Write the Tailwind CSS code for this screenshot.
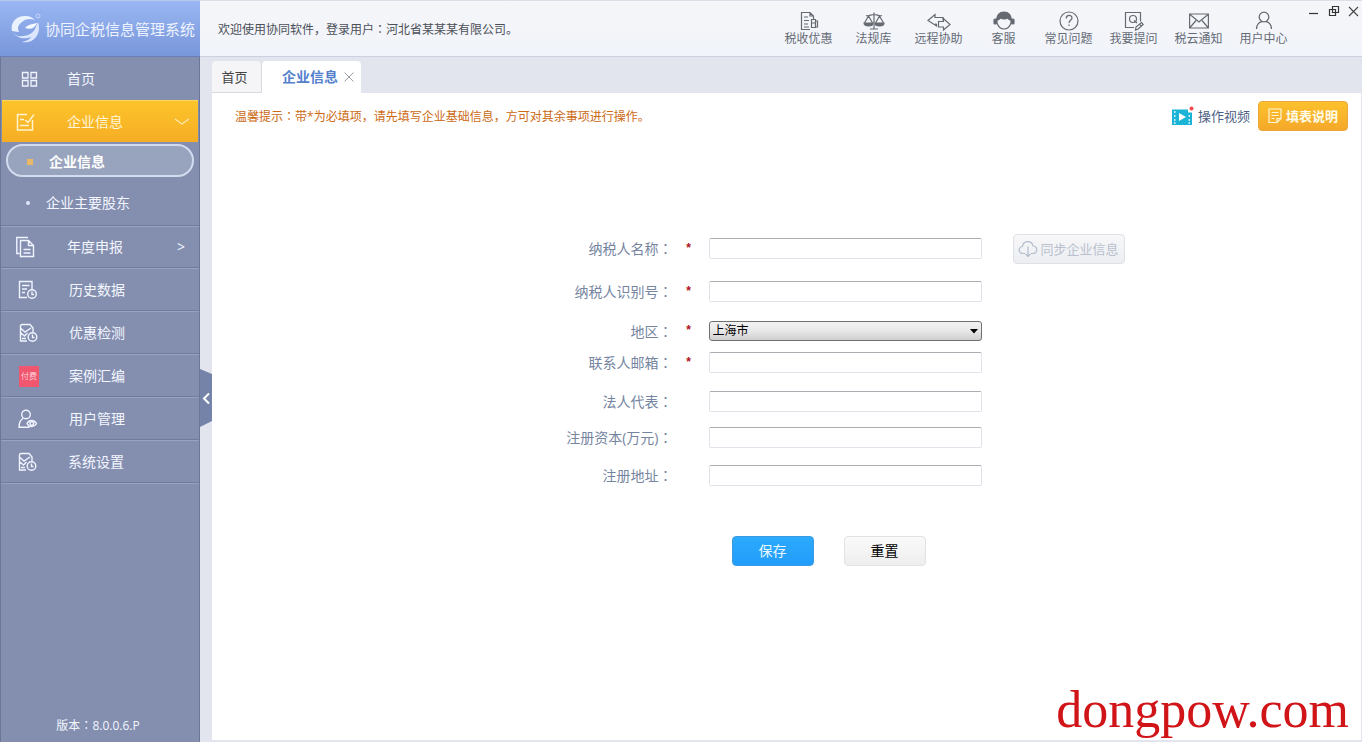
<!DOCTYPE html>
<html lang="zh-CN">
<head>
<meta charset="utf-8">
<title>协同企税信息管理系统</title>
<script src="https://cdn.jsdelivr.net/npm/@tailwindcss/browser@4"></script>
</head>
<body class="flex min-h-screen bg-[#e3e5ee] font-['Open_Sans','Noto_Sans_CJK_SC',sans-serif] text-sm leading-5">

<!-- Sidebar -->
<aside class="flex w-[200px] shrink-0 flex-col border-x border-[#6b7795] bg-[#848fb0] text-[#f3f6ff]">
  <div class="-mx-px flex h-[57px] items-center gap-1 border-b border-[#6a7fb5] border-t border-t-[#b9c9ee] bg-linear-to-b from-[#9ab6f3] to-[#7897da] pl-[11px] text-[15px] whitespace-nowrap text-[#eef3ff]">
    <svg class="h-8 w-[30px] shrink-0" viewBox="0 0 30 32">
      <path d="M1 18C-1 9 6 2 15 3c4 0 7 2 9 4-5-2-10-1-13 2-4 3-5 6-3 10-3 0-5-1-7-1z" fill="#eaf1ff"/>
      <path d="M1 18c2 4 6 6 11 5 5 0 10-3 12-7l3-7c2 6 1 11-2 15-4 5-9 6-14 5 5-1 8-3 9-5-7 3-15 1-19-6z" fill="#dce7ff"/>
      <path d="M14 15c3-4 8-4 12-5-2 5-6 7-12 5z" fill="#f4f8ff"/>
      <circle cx="27" cy="3" r="2" fill="none" stroke="#c6d6fa"/>
    </svg>
    <span>协同企税信息管理系统</span>
  </div>
  <nav class="flex flex-col">
    <a href="#" class="flex h-[43px] items-center pl-5">
      <svg class="w-[46px] h-4" viewBox="0 0 46 16" fill="none" stroke="#f0f4ff" stroke-width="1.3"><path d="M1.500 1.500h5.500v5.500h-5.500zM10 1.500h5.500v5.500h-5.500zM1.500 9.500h5.500v5.500h-5.500zM10 9.500h5.500v5.500h-5.500z"/></svg>
      首页</a>
    <a href="#" class="flex h-[42px] items-center justify-between border-t border-[#fdd45c] bg-linear-to-b from-[#fcc42a] to-[#f6ad25] pr-2 pl-3.5 text-[#fff6dc] ml-px mr-px">
      <span class="flex items-center"><svg class="h-5 w-[51px]" viewBox="0 0 51 20" fill="none" stroke="#fff3cf" stroke-width="1.500"><path d="M11 2.500H1.500v15.500h15V8M4 7.500h4M4 13.500h9M9 8l3 2.500 6-8"/></svg>企业信息</span>
      <svg class="h-2 w-4" viewBox="0 0 16 8" fill="none" stroke="#fde9b0" stroke-width="1.200"><path d="M1 1l7 5 7-5"/></svg>
    </a>
    <div class="flex h-[83px] flex-col px-[5px] pt-0.5">
      <a href="#" class="flex h-[34px] items-center rounded-full border-2 border-[#d3dbee] bg-[#98a3bd] pt-1 pl-[19px] font-bold text-white"><span class="mr-4 size-[6px] bg-[#e8b868]"></span>企业信息</a>
      <a href="#" class="flex h-[50px] items-center pt-1 pl-5"><span class="mr-4 size-1 rounded-full bg-[#dfe6fa]"></span>企业主要股东</a>
    </div>
    <a href="#" class="flex h-[43px] items-center justify-between border-t border-b border-t-[#6f7b9e] border-b-[#6f7b9e] pr-3.5 pl-[15px] shadow-[inset_0_1px_0_#98a3c2]">
      <span class="flex items-center"><svg class="h-[22px] w-[51px]" viewBox="0 0 51 22" fill="none" stroke="#f0f4ff" stroke-width="1.400"><path d="M3.500 17.500H.800V1.500h11.200M4.500 4.500h8l5 5v11h-13zM12.500 4.500v5h5M7.500 13.500h7M7.500 17h7"/></svg>年度申报</span><span>&gt;</span></a>
    <a href="#" class="flex h-[43px] items-center border-b border-[#6f7b9e] pt-0.5 pl-[17px] shadow-[inset_0_1px_0_#98a3c2]">
      <svg class="h-5 w-[51px]" viewBox="0 0 51 20" fill="none" stroke="#f0f4ff" stroke-width="1.400"><path d="M9 17.500H1.500v-16h12.500V9M4 5.500h7.500M4 9h5M4 12.500h3"/><circle cx="14" cy="14" r="4.300"/><path d="M14 11.500v3h2"/></svg>历史数据</a>
    <a href="#" class="flex h-[43px] items-center border-b border-[#6f7b9e] pt-0.5 pl-[17px] shadow-[inset_0_1px_0_#98a3c2]">
      <svg class="h-5 w-[51px]" viewBox="0 0 51 20" fill="none" stroke="#f0f4ff" stroke-width="1.400"><path d="M9 18H2.500V3q0-1.500 1.500-1.500h8l3 3.500v4M3 5.500l4 3.500 6-4M3 10l3.500 3 3-3M4 15.500h4"/><circle cx="14.500" cy="14" r="4.300"/><path d="M14.500 11.500v3h2"/></svg>优惠检测</a>
    <a href="#" class="flex h-[43px] items-center border-b border-[#6f7b9e] pt-0.5 pl-[18px] shadow-[inset_0_1px_0_#98a3c2]">
      <span class="mr-[30px] flex h-[21px] w-5 items-center justify-center bg-[#f0566e] text-[8px] text-[#ffd3d9] whitespace-nowrap">付费</span>案例汇编</a>
    <a href="#" class="flex h-[43px] items-center border-b border-[#6f7b9e] pt-0.5 pl-[17px] shadow-[inset_0_1px_0_#98a3c2]">
      <svg class="h-5 w-[51px]" viewBox="0 0 51 20" fill="none" stroke="#f0f4ff" stroke-width="1.400"><circle cx="8" cy="5.500" r="4.300"/><path d="M5 9.500C2.500 11 1 14 1 18.300h10.500M9 14.500c2-4 7-4 9.500 0-2.500 4-7.500 4-9.500 0z"/><circle cx="13.800" cy="14.500" r="1.800"/></svg>用户管理</a>
    <a href="#" class="flex h-[43px] items-center border-b border-[#6f7b9e] pt-0.5 pl-4 shadow-[inset_0_1px_0_#98a3c2,0_1px_0_#98a3c2]">
      <svg class="h-5 w-[51px]" viewBox="0 0 51 20" fill="none" stroke="#f0f4ff" stroke-width="1.400"><path d="M9 18H2.500V3q0-1.500 1.500-1.500h8l3 3.500v4M3 5.500l4 3.500 6-4M3 10l3.500 3 3-3M4 15.500h4"/><circle cx="14.500" cy="14" r="4.300"/><path d="M14.500 11.500v3h2"/></svg>系统设置</a>
  </nav>
  <p class="mt-auto pb-1.5 pr-1 text-center text-xs leading-5">版本<span lang="zh-TW" class="font-['Noto_Sans_CJK_TC']">：</span>8.0.0.6.P</p>
</aside>

<div class="flex min-w-0 flex-1 flex-col">
  <!-- Top bar -->
  <header class="flex h-[57px] shrink-0 border-t border-b border-t-[#dcdfe8] border-b-[#ccd1df] bg-linear-to-b from-[#f5f6f9] to-[#f1f4fa] pl-[18px] text-xs text-[#4b4f58]">
    <p class="mr-auto pt-[18px] leading-5">欢迎使用协同软件，登录用户<span lang="zh-TW" class="font-['Noto_Sans_CJK_TC']">：</span>河北省某某某有限公司。</p>
    <nav class="flex pt-2.5 text-[#666b76] whitespace-nowrap">
      <a href="#" class="flex w-[65px] flex-col items-center"><svg class="h-5 w-5" viewBox="0 0 20 20" fill="none" stroke="#666a72" stroke-width="1.200"><path d="M11 18.500H2.500v-17h8.500l3.500 3.500v3M11 1.500v3.500h3.500M5 6h4M5 9.500h5M5 13h4M5 16h5"/><path d="M12.500 8.500h4v8h-4zM12.500 12h4M16.500 10h2v6h-2z"/></svg><span class="leading-4">税收优惠</span></a>
      <a href="#" class="flex w-[65px] flex-col items-center"><svg class="h-5 w-[22px]" viewBox="0 0 22 20" fill="none" stroke="#666a72" stroke-width="1.200"><path d="M11 1.500v16M7 18h8M3 4.500c3 1 5-1 8-1s5 2 8 1M5.500 5L1.500 12M5.500 5l4 7M16.500 5l-4 7M16.500 5l4 7"/><path d="M1 12h9c0 4-9 4-9 0zM12 12h9c0 4-9 4-9 0z" fill="#666a72"/></svg><span class="leading-4">法规库</span></a>
      <a href="#" class="flex w-[65px] flex-col items-center"><svg class="h-5 w-6" viewBox="0 0 24 20" fill="none" stroke="#666a72" stroke-width="1.200"><path d="M9.500 13v2L1 9.500 8 3.500V6.500h8v3M8 13h1.500"/><path d="M11.500 10.500h5v-3l6.500 6-6.500 5.500v-3h-5z"/></svg><span class="leading-4">远程协助</span></a>
      <a href="#" class="flex w-[65px] flex-col items-center"><svg class="h-5 w-[22px]" viewBox="0 0 22 20" fill="none" stroke="#666a72" stroke-width="1.200"><path d="M3.500 9C4 3 7 1 11 1s7 2 7.500 8c-2 0-3-1-4-2-3 2-5 1-7 0-1 1-2 2-4 2z" fill="#666a72"/><path d="M4 9v3c1 3 3 6 7 6s6-3 7-6V9"/><rect x="1" y="8" width="2.500" height="5" rx="1" fill="#666a72"/><rect x="18.500" y="8" width="2.500" height="5" rx="1" fill="#666a72"/></svg><span class="leading-4">客服</span></a>
      <a href="#" class="flex w-[65px] flex-col items-center"><svg class="h-5 w-5" viewBox="0 0 20 20" fill="none" stroke="#666a72" stroke-width="1.200"><circle cx="10" cy="10" r="9"/><path d="M7.200 7.500c0-4 5.800-4 5.800-.500 0 2.300-3 2.300-3 5M10 13.500v1.600"/></svg><span class="leading-4">常见问题</span></a>
      <a href="#" class="flex w-[65px] flex-col items-center"><svg class="h-5 w-5" viewBox="0 0 20 20" fill="none" stroke="#666a72" stroke-width="1.200"><path d="M10 16.500H1.500v-15h15v9"/><circle cx="9" cy="8" r="3.500"/><path d="M10 9.500l3 2.500M11.500 19l.500-3 5.500-4.500 1.700 2-5 4.500zM15.500 13l2 2.500"/></svg><span class="leading-4">我要提问</span></a>
      <a href="#" class="flex w-[65px] flex-col items-center"><svg class="h-5 w-5" viewBox="0 0 20 20" fill="none" stroke="#666a72" stroke-width="1.200"><path d="M.600 3h18.800v14H.600zM1 3.500l9 7.500 9-7.500M1 16.500l6-7M19 16.500l-6-7"/></svg><span class="leading-4">税云通知</span></a>
      <a href="#" class="flex w-[65px] flex-col items-center"><svg class="h-5 w-[18px]" viewBox="0 0 18 20" fill="none" stroke="#666a72" stroke-width="1.300"><circle cx="9" cy="6" r="4.800"/><path d="M1.500 18c0-4 2.500-7 5.500-7.500M16.500 18c0-4-2.500-7-5.500-7.500"/></svg><span class="leading-4">用户中心</span></a>
    </nav>
    <div class="flex gap-2 pt-1 pr-0.5 pl-3">
      <button type="button" aria-label="最小化" class="h-3"><svg class="size-3" viewBox="0 0 12 12" stroke="#333" stroke-width="1.200"><path d="M1 8.500h9"/></svg></button>
      <button type="button" aria-label="还原" class="h-3"><svg class="size-3" viewBox="0 0 12 12" fill="none" stroke="#333" stroke-width="1.200"><path d="M1.500 4.500h6v6h-6zM4.500 7.500v-6h6v6z"/></svg></button>
      <button type="button" aria-label="关闭" class="h-3"><svg class="size-3" viewBox="0 0 12 12" stroke="#444" stroke-width="1.100"><path d="M1 2l9 9M10 2l-9 9"/></svg></button>
    </div>
  </header>

  <div class="flex flex-1">
    <!-- Collapse handle -->
    <div class="w-3 shrink-0 pt-[312px]">
      <button type="button" aria-label="收起菜单" class="block h-[58px] w-3"><svg class="h-[58px] w-3" viewBox="0 0 12 58"><path d="M0 0l12 5v47L0 58z" fill="#7683a8"/><path d="M9 24.500l-5 5 5 5" fill="none" stroke="#fff" stroke-width="2"/></svg></button>
    </div>
    <div class="flex min-w-0 flex-1 flex-col pr-px pb-0.5">
      <!-- Tabs -->
      <div class="flex h-9 items-end">
        <a href="#" class="flex h-8 w-[50px] items-center justify-center rounded-t-sm border-r border-b border-[#d8dae2] bg-[#f5f5f7] pr-1 text-[13px] text-[#444]">首页</a>
        <div class="flex h-8 w-[99px] items-center justify-end gap-1.5 rounded-t-sm bg-white pr-[7px]">
          <a href="#" class="font-bold text-[#5580cc]">企业信息</a>
          <button type="button" aria-label="关闭标签" class="flex"><svg class="size-[10px]" viewBox="0 0 10 10" stroke="#9a9ca6"><path d="M.500.500l9 9M9.500.500l-9 9"/></svg></button>
        </div>
      </div>
      <main class="flex flex-1 flex-col bg-white">
        <div class="flex items-center justify-between pt-2 pr-[13px] pl-[23px]">
          <p class="text-xs leading-5 text-[#cc6a14]">温馨提示<span lang="zh-TW" class="font-['Noto_Sans_CJK_TC']">：</span>带*为必填项，请先填写企业基础信息，方可对其余事项进行操作。</p>
          <div class="flex items-center gap-2">
            <a href="#" class="flex items-center gap-1 text-[13px] text-[#4d5f85]">
              <svg class="h-5 w-[22px]" viewBox="0 0 22 20"><path d="M0 3.500h16v3h4v12.500H0z" fill="#1ab4d6"/><path d="M2 6h1.500M2 10h1.500M2 14h1.500M16.500 10H18M16.500 14H18M2 17h1.500M16.500 17H18" stroke="#fff" stroke-width="1.500"/><path d="M7 7l7 4-7 4z" fill="#fff"/><circle cx="19.500" cy="2.500" r="2" fill="#ee4b4b"/></svg>
              操作视频</a>
            <button type="button" class="flex h-[30px] w-[90px] items-center justify-center gap-1 rounded border border-[#e9a93a] bg-linear-to-b from-[#fcc12c] to-[#f5a82a] text-[13px] font-bold text-[#fffbe8]">
              <svg class="h-4 w-[14px]" viewBox="0 0 14 16" fill="none" stroke="#fff6d8" stroke-width="1.200"><path d="M1 1h12v9.500L9 14.500H1zM13 10.500H9v4M3.500 4.500h7M3.500 7.500h7M3.500 10.500h3"/></svg>
              填表说明</button>
          </div>
        </div>

        <!-- Taxpayer form -->
        <form class="mx-auto mt-[107px] w-[680px] text-[#75859f]">
          <div class="flex h-[21px] items-center">
            <label for="f1" class="w-[226px] text-right">纳税人名称<span lang="zh-TW" class="font-['Noto_Sans_CJK_TC']">：</span></label><span class="w-9 pr-1 text-center font-['Liberation_Mono',monospace] text-xs font-bold text-[#b01020]">*</span>
            <input id="f1" type="text" class="h-[21px] w-[273px] rounded-[2px] border border-[#e2e3ea] border-t-[#abadb3] bg-white px-1 text-xs text-black">
            <button type="button" disabled class="ml-[31px] flex h-[30px] w-[112px] shrink-0 items-center justify-center gap-0.5 rounded border border-[#dfe1e8] bg-linear-to-b from-[#f7f7f8] to-[#eceef2] text-[13px] text-[#b9c0ce]">
              <svg class="h-[18px] w-5" viewBox="0 0 20 18" fill="none" stroke="#b3bccc" stroke-width="1.200"><path d="M7 13.500H5c-5-.500-5-6.500-.500-7C5 0 14 0 15 6c5 .500 5 7 0 7.500h-2M10 6.500v10M7.500 14l2.500 2.500 2.500-2.500"/></svg>
              同步企业信息</button>
          </div>
          <div class="mt-[22px] flex h-[21px] items-center">
            <label for="f2" class="w-[226px] text-right">纳税人识别号<span lang="zh-TW" class="font-['Noto_Sans_CJK_TC']">：</span></label><span class="w-9 pr-1 text-center font-['Liberation_Mono',monospace] text-xs font-bold text-[#b01020]">*</span>
            <input id="f2" type="text" class="h-[21px] w-[273px] rounded-[2px] border border-[#e2e3ea] border-t-[#abadb3] bg-white px-1 text-xs text-black">
          </div>
          <div class="mt-[19px] flex h-5 items-center">
            <label for="f3" class="w-[226px] text-right">地区<span lang="zh-TW" class="font-['Noto_Sans_CJK_TC']">：</span></label><span class="w-9 pr-1 text-center font-['Liberation_Mono',monospace] text-xs font-bold text-[#b01020]">*</span>
            <div class="relative w-[273px]">
              <select id="f3" class="block h-5 w-full appearance-none rounded-[3px] border border-[#707070] bg-linear-to-b from-[#f2f2f2] from-0% via-[#e8e8e8] via-50% to-[#cfcfcf] pl-[3px] text-xs leading-4 text-black"><option>上海市</option></select>
              <svg class="pointer-events-none absolute top-2 right-1 h-[5px] w-[8px]" viewBox="0 0 8 5"><path d="M0 0h8L4 4.500z"/></svg>
            </div>
          </div>
          <div class="mt-[11px] flex h-[21px] items-center">
            <label for="f4" class="w-[226px] text-right">联系人邮箱<span lang="zh-TW" class="font-['Noto_Sans_CJK_TC']">：</span></label><span class="w-9 pr-1 text-center font-['Liberation_Mono',monospace] text-xs font-bold text-[#b01020]">*</span>
            <input id="f4" type="text" class="h-[21px] w-[273px] rounded-[2px] border border-[#e2e3ea] border-t-[#abadb3] bg-white px-1 text-xs text-black">
          </div>
          <div class="mt-[18px] flex h-[21px] items-center">
            <label for="f5" class="mr-9 w-[226px] text-right">法人代表<span lang="zh-TW" class="font-['Noto_Sans_CJK_TC']">：</span></label>
            <input id="f5" type="text" class="h-[21px] w-[273px] rounded-[2px] border border-[#e2e3ea] border-t-[#abadb3] bg-white px-1 text-xs text-black">
          </div>
          <div class="mt-[15px] flex h-[21px] items-center">
            <label for="f6" class="mr-9 w-[226px] text-right">注册资本(万元)<span lang="zh-TW" class="font-['Noto_Sans_CJK_TC']">：</span></label>
            <input id="f6" type="text" class="h-[21px] w-[273px] rounded-[2px] border border-[#e2e3ea] border-t-[#abadb3] bg-white px-1 text-xs text-black">
          </div>
          <div class="mt-[17px] flex h-[21px] items-center">
            <label for="f7" class="mr-9 w-[226px] text-right">注册地址<span lang="zh-TW" class="font-['Noto_Sans_CJK_TC']">：</span></label>
            <input id="f7" type="text" class="h-[21px] w-[273px] rounded-[2px] border border-[#e2e3ea] border-t-[#abadb3] bg-white px-1 text-xs text-black">
          </div>
          <div class="mt-[50px] flex gap-[30px] pl-[285px]">
            <button type="submit" class="h-[30px] w-[82px] rounded border border-[#3a9be0] bg-linear-to-b from-[#2caafc] to-[#229cfc] text-[#eaf8ff]">保存</button>
            <button type="reset" class="h-[30px] w-[82px] rounded border border-[#e2e2e4] bg-linear-to-b from-[#fafafa] to-[#eeeeee] text-black">重置</button>
          </div>
        </form>
        <p class="mt-auto pr-3 pb-0.5 text-right font-['Liberation_Serif',serif] text-[52px] leading-[56px] text-[#d01418]">dongpow.com</p>
      </main>
    </div>
  </div>
</div>
</body>
</html>
